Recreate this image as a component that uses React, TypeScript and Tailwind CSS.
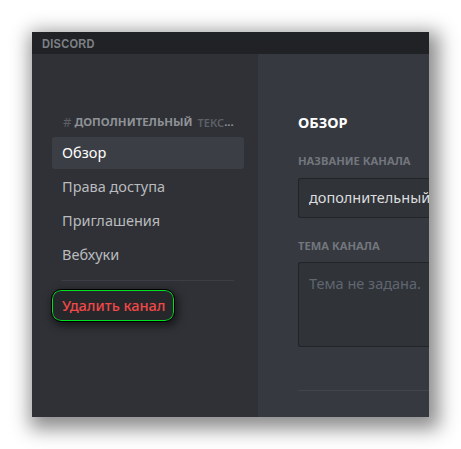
export default function App() {
  const font = { fontFamily: '"Noto Sans", sans-serif' };
  return (
    <div className="w-[461px] h-[449px] bg-white pt-8 pl-8 overflow-hidden" style={font}>
      <div className="w-[397px] h-[385px] flex flex-col overflow-hidden shadow-[4px_6px_18px_6px_rgba(0,0,0,0.45)]">
        <div className="h-[22px] shrink-0 bg-[#202225] pl-[10px] flex items-center">
          <span className="text-[11px] leading-none font-black tracking-[0.3px] text-[#7c8086] scale-y-[1.2]" style={{ fontFamily: '"Liberation Sans", sans-serif' }}>DISCORD</span>
        </div>
        <div className="flex flex-1 min-h-0">
          <div className="w-[226px] shrink-0 bg-[#2f3136] pt-[51px] pl-5 pr-[14px]">
            <div className="h-[32px] pl-[11px] pt-[2px] flex items-center text-[11.4px] font-bold leading-none whitespace-nowrap overflow-hidden">
              <span className="text-[#5d6067] mr-[3px] font-normal text-[13px]">#</span>
              <span className="text-[#8e9297]">ДОПОЛНИТЕЛЬНЫЙ</span>
              <span className="text-[#5d6067] ml-[5px] font-semibold text-[11px]">ТЕКС</span>
              <span className="text-[#8e9297]">...</span>
            </div>
            <div className="h-8 mb-[2px] rounded-[3px] bg-[#3b3e45] pl-[10px] flex items-center text-[14.5px] text-white">Обзор</div>
            <div className="h-8 mb-[2px] pl-[10px] flex items-center text-[14.5px] text-[#b9bbbe]">Права доступа</div>
            <div className="h-8 mb-[2px] pl-[10px] flex items-center text-[14.5px] text-[#b9bbbe]">Приглашения</div>
            <div className="h-8 mb-[2px] pl-[10px] flex items-center text-[14.5px] text-[#b9bbbe]">Вебхуки</div>
            <div className="h-px bg-[#3b3e45] mx-[10px] mt-[9px]" />
            <div className="mt-[9px] w-[122px] h-[31px] rounded-[9px] bg-[#26272b] border border-[#00e020] outline outline-1 outline-black shadow-[2px_3px_8px_2px_rgba(0,0,0,0.55)] pl-[9px] flex items-center text-[14.5px] font-medium text-[#f04747] whitespace-nowrap">Удалить канал</div>
          </div>
          <div className="flex-1 min-w-0 bg-[#36393f] pt-[58px] pl-10 overflow-hidden">
            <div className="text-[14.5px] leading-[20px] font-bold text-white">ОБЗОР</div>
            <div className="mt-[21px] text-[11.2px] leading-[16px] font-bold text-[#72767d] whitespace-nowrap">НАЗВАНИЕ КАНАЛА</div>
            <div className="mt-[9px] w-[200px] h-10 rounded-l-[3px] bg-[#303338] border border-r-0 border-[#222427] pl-[10px] flex items-center text-[14.5px] text-[#dcddde] whitespace-nowrap">дополнительный</div>
            <div className="mt-5 text-[11.2px] leading-[16px] font-bold text-[#72767d] whitespace-nowrap">ТЕМА КАНАЛА</div>
            <div className="mt-2 w-[200px] h-[85px] rounded-l-[3px] bg-[#303338] border border-r-0 border-[#222427] pl-[10px] pt-[9px] text-[14.5px] leading-[22px] text-[#5f6670] whitespace-nowrap">Тема не задана.</div>
            <div className="mt-[43px] h-px bg-[#42454b]" />
          </div>
        </div>
      </div>
    </div>
  );
}
